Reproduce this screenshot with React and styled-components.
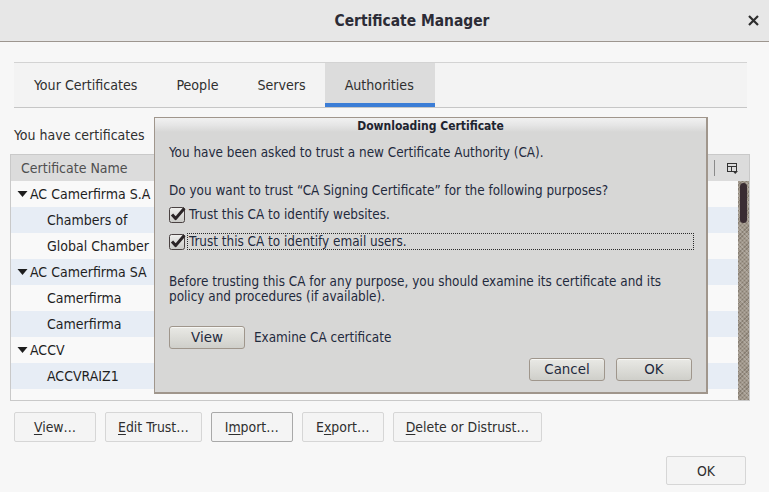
import React from "react";
import styled, { createGlobalStyle, css } from "styled-components";

const GlobalStyle = createGlobalStyle`
  html, body { margin: 0; padding: 0; background: #f7f7f7; }
  * { box-sizing: border-box; }
`;

const uiFont = css`
  font-family: "DejaVu Sans Condensed", "DejaVu Sans", sans-serif;
  font-stretch: condensed;
`;
const treeFont = css`
  font-family: "DejaVu Sans", "Liberation Sans", sans-serif;
`;

const Window = styled.div`
  position: relative;
  width: 769px;
  height: 492px;
  background: #f7f7f7;
  display: flex;
  flex-direction: column;
  overflow: hidden;
  ${uiFont};
`;

const TitleBar = styled.div`
  height: 42px;
  flex: none;
  display: flex;
  align-items: center;
  background: #e7e7e7;
  border-bottom: 1px solid #9d968f;
`;

const Title = styled.div`
  flex: 1;
  text-align: center;
  padding-left: 76px;
  font-size: 15.4px;
  font-weight: bold;
  color: #2c2c36;
`;

const CloseBtn = styled.div`
  width: 11px;
  height: 11px;
  margin-right: 10px;
  display: flex;
`;

const Content = styled.div`
  flex: 1;
  display: flex;
  flex-direction: column;
  padding: 20px 19px 0 10px;
`;

const TabStrip = styled.div`
  margin: 0 3px 0 4px;
  height: 46px;
  display: flex;
  background: #f3f3f3;
  border-top: 1px solid #d3d3d3;
  border-bottom: 1px solid #c6c6c6;
`;

const Tab = styled.div`
  padding: 0 19px 0 20px;
  display: flex;
  align-items: center;
  font-size: 14.1px;
  color: #2f2f2f;
  ${(p) =>
    p.$active &&
    css`
      padding-right: 21px;
      background: #dcdcdc;
      box-shadow: inset 0 -4px 0 #3b7dd6;
    `}
`;

const Intro = styled.div`
  ${treeFont};
  font-size: 14px;
  color: #303030;
  line-height: 16px;
  margin: 19px 0 11px 4px;
  white-space: nowrap;
`;

const Tree = styled.div`
  height: 247px;
  border: 1px solid #c9c9c9;
  background: #f9f9f9;
  display: flex;
  flex-direction: column;
  ${treeFont};
  font-size: 14px;
`;

const TreeHeader = styled.div`
  height: 26px;
  flex: none;
  display: grid;
  grid-template-columns: 1fr 35px;
  align-items: center;
  background: #dcdcdc;
  color: #4f4f4f;
`;

const HeaderCell = styled.div`
  padding-left: 10px;
  white-space: nowrap;
`;

const PickerCell = styled.div`
  height: 100%;
  display: flex;
  align-items: center;
  gap: 12px;
`;

const ColSep = styled.div`
  width: 1px;
  height: 16px;
  background: #8a8a8a;
`;

const TreeBody = styled.div`
  flex: 1;
  display: grid;
  grid-template-columns: 1fr 11px;
  min-height: 0;
`;

const Rows = styled.div`
  display: flex;
  flex-direction: column;
`;

const Row = styled.div`
  height: 26px;
  display: flex;
  align-items: center;
  color: #1e1e1e;
  background: ${(p) => (p.$alt ? "#e7edf5" : "#f9f9f9")};
`;

const NameCell = styled.div`
  display: flex;
  align-items: center;
  white-space: nowrap;
  padding-left: ${(p) => (p.$child ? "36px" : "6px")};
  gap: 2px;
`;

const Scrollbar = styled.div`
  background-color: #a0978b;
  background-image: repeating-linear-gradient(
      45deg,
      rgba(255, 255, 255, 0.18) 0 1px,
      transparent 1px 3px
    ),
    repeating-linear-gradient(
      -45deg,
      rgba(60, 50, 40, 0.25) 0 1px,
      transparent 1px 3px
    );
  padding: 2px 2px 0 2px;
`;

const Thumb = styled.div`
  height: 40px;
  border-radius: 4px;
  background: #3a2c33;
`;

const ButtonRow = styled.div`
  display: flex;
  gap: 9px;
  margin: 11px 0 0 4px;
`;

const Button = styled.button`
  ${uiFont};
  height: 30px;
  min-width: 82px;
  padding: 0 12px;
  font-size: 13.9px;
  color: #2f2f2f;
  background: #f4f4f4;
  border: 1px solid ${(p) => (p.$focus ? "#a9a9a9" : "#d6d6d6")};
  border-radius: 2px;
  u { text-decoration-thickness: 1px; text-underline-offset: 2px; }
`;

const OkButton = styled(Button)`
  align-self: flex-end;
  margin: 14px 4px 0 0;
  height: 29px;
  min-width: 80px;
`;

/* Modal dialog */
const Dialog = styled.div`
  position: absolute;
  left: 154px;
  top: 117px;
  width: 554px;
  height: 277px;
  background: #d7d7d6;
  border: 1px solid #a0968c;
  border-right-width: 2px;
  border-bottom-width: 2px;
  display: flex;
  flex-direction: column;
  ${treeFont};
  color: #1f2a3d;
  font-size: 13.4px;
`;

const DialogTitle = styled.div`
  height: 20px;
  flex: none;
  padding-top: 1px;
  text-align: center;
  font-weight: bold;
  font-size: 12px;
  color: #1e2430;
  background: linear-gradient(#f1f1f1 0%, #e6e6e6 35%, #d7d7d6 70%);
`;

const DialogBody = styled.div`
  flex: 1;
  display: flex;
  flex-direction: column;
  padding: 0 14px 11px 14px;
`;

const Line = styled.div`
  line-height: 15px;
  margin-top: ${(p) => p.$mt || 0}px;
  white-space: nowrap;
`;

const CheckRow = styled.div`
  display: flex;
  align-items: center;
  gap: 2px;
  height: 17px;
  margin-top: ${(p) => p.$mt || 0}px;
`;

const CheckLabel = styled.div`
  flex: 1;
  line-height: 15px;
  padding: 0 1px;
  margin-right: -1px;
  ${(p) => p.$focus && css`outline: 1px dotted #2a2a2a;`}
`;

const Row2 = styled.div`
  display: flex;
  align-items: center;
  gap: 9px;
  margin-top: ${(p) => p.$mt || 0}px;
  ${(p) => p.$end && css`justify-content: flex-end; gap: 11px;`}
`;

const DlgButton = styled.button`
  ${treeFont};
  font-size: 13.4px;
  color: #1f2a3d;
  width: 76px;
  height: 23px;
  padding: 0;
  border: 1px solid #9f968c;
  border-radius: 3px;
  background: linear-gradient(#e9e9e5, #cfcfca);
  box-shadow: inset 0 1px 0 #f6f6f4;
`;

const Twisty = () => (
  <svg width="11" height="6" viewBox="0 0 11 6">
    <polygon points="0.5,0 10.5,0 5.5,6" fill="#1d1d1d" />
  </svg>
);

const CheckBox = () => (
  <svg width="17" height="17" viewBox="0 0 17 17">
    <defs>
      <linearGradient id="cbg" x1="0" y1="0" x2="0" y2="1">
        <stop offset="0" stopColor="#f0f0ee" />
        <stop offset="1" stopColor="#c9c9c6" />
      </linearGradient>
    </defs>
    <rect x="0.5" y="1.5" width="15" height="15" rx="2" fill="url(#cbg)" stroke="#4a4242" />
    <path d="M3 8.4 L6.6 12.6 L15.4 2.2" fill="none" stroke="#2a2426" strokeWidth="3" strokeLinejoin="round" />
  </svg>
);

const PickerIcon = () => (
  <svg width="11" height="11" viewBox="0 0 11 11">
    <rect x="0.5" y="0.5" width="9" height="8" fill="none" stroke="#333" />
    <line x1="0.5" y1="3.5" x2="9.5" y2="3.5" stroke="#333" />
    <line x1="4.5" y1="3.5" x2="4.5" y2="8.5" stroke="#333" />
    <polygon points="5.5,8 11,8 8.25,11" fill="#333" />
  </svg>
);

const rows = [
  { name: "AC Camerfirma S.A", parent: true },
  { name: "Chambers of" },
  { name: "Global Chamber" },
  { name: "AC Camerfirma SA", parent: true },
  { name: "Camerfirma" },
  { name: "Camerfirma" },
  { name: "ACCV", parent: true },
  { name: "ACCVRAIZ1" },
];

export default function App() {
  return (
    <>
      <GlobalStyle />
      <Window>
        <TitleBar>
          <Title>Certificate Manager</Title>
          <CloseBtn>
            <svg width="11" height="11" viewBox="0 0 11 11">
              <path d="M1 1 L10 10 M10 1 L1 10" stroke="#2e2e2e" strokeWidth="2.2" />
            </svg>
          </CloseBtn>
        </TitleBar>
        <Content>
          <TabStrip>
            <Tab>Your Certificates</Tab>
            <Tab>People</Tab>
            <Tab>Servers</Tab>
            <Tab $active>Authorities</Tab>
          </TabStrip>
          <Intro>You have certificates</Intro>
          <Tree>
            <TreeHeader>
              <HeaderCell>Certificate Name</HeaderCell>
              <PickerCell>
                <ColSep />
                <PickerIcon />
              </PickerCell>
            </TreeHeader>
            <TreeBody>
              <Rows>
                {rows.map((r, i) => (
                  <Row key={i} $alt={i % 2 === 1}>
                    <NameCell $child={!r.parent}>
                      {r.parent && <Twisty />}
                      {r.name}
                    </NameCell>
                  </Row>
                ))}
              </Rows>
              <Scrollbar>
                <Thumb />
              </Scrollbar>
            </TreeBody>
          </Tree>
          <ButtonRow>
            <Button><u>V</u>iew…</Button>
            <Button><u>E</u>dit Trust…</Button>
            <Button $focus>I<u>m</u>port…</Button>
            <Button>E<u>x</u>port…</Button>
            <Button><u>D</u>elete or Distrust…</Button>
          </ButtonRow>
          <OkButton>OK</OkButton>
        </Content>

        <Dialog>
          <DialogTitle>Downloading Certificate</DialogTitle>
          <DialogBody>
            <Line $mt={7}>You have been asked to trust a new Certificate Authority (CA).</Line>
            <Line $mt={23}>Do you want to trust “CA Signing Certificate” for the following purposes?</Line>
            <CheckRow $mt={8}>
              <CheckBox />
              <CheckLabel>Trust this CA to identify websites.</CheckLabel>
            </CheckRow>
            <CheckRow $mt={10}>
              <CheckBox />
              <CheckLabel $focus>Trust this CA to identify email users.</CheckLabel>
            </CheckRow>
            <Line $mt={24}>
              Before trusting this CA for any purpose, you should examine its certificate and its
            </Line>
            <Line>policy and procedures (if available).</Line>
            <Row2 $mt={22}>
              <DlgButton>View</DlgButton>
              <span>Examine CA certificate</span>
            </Row2>
            <Row2 $mt={9} $end>
              <DlgButton>Cancel</DlgButton>
              <DlgButton>OK</DlgButton>
            </Row2>
          </DialogBody>
        </Dialog>
      </Window>
    </>
  );
}
